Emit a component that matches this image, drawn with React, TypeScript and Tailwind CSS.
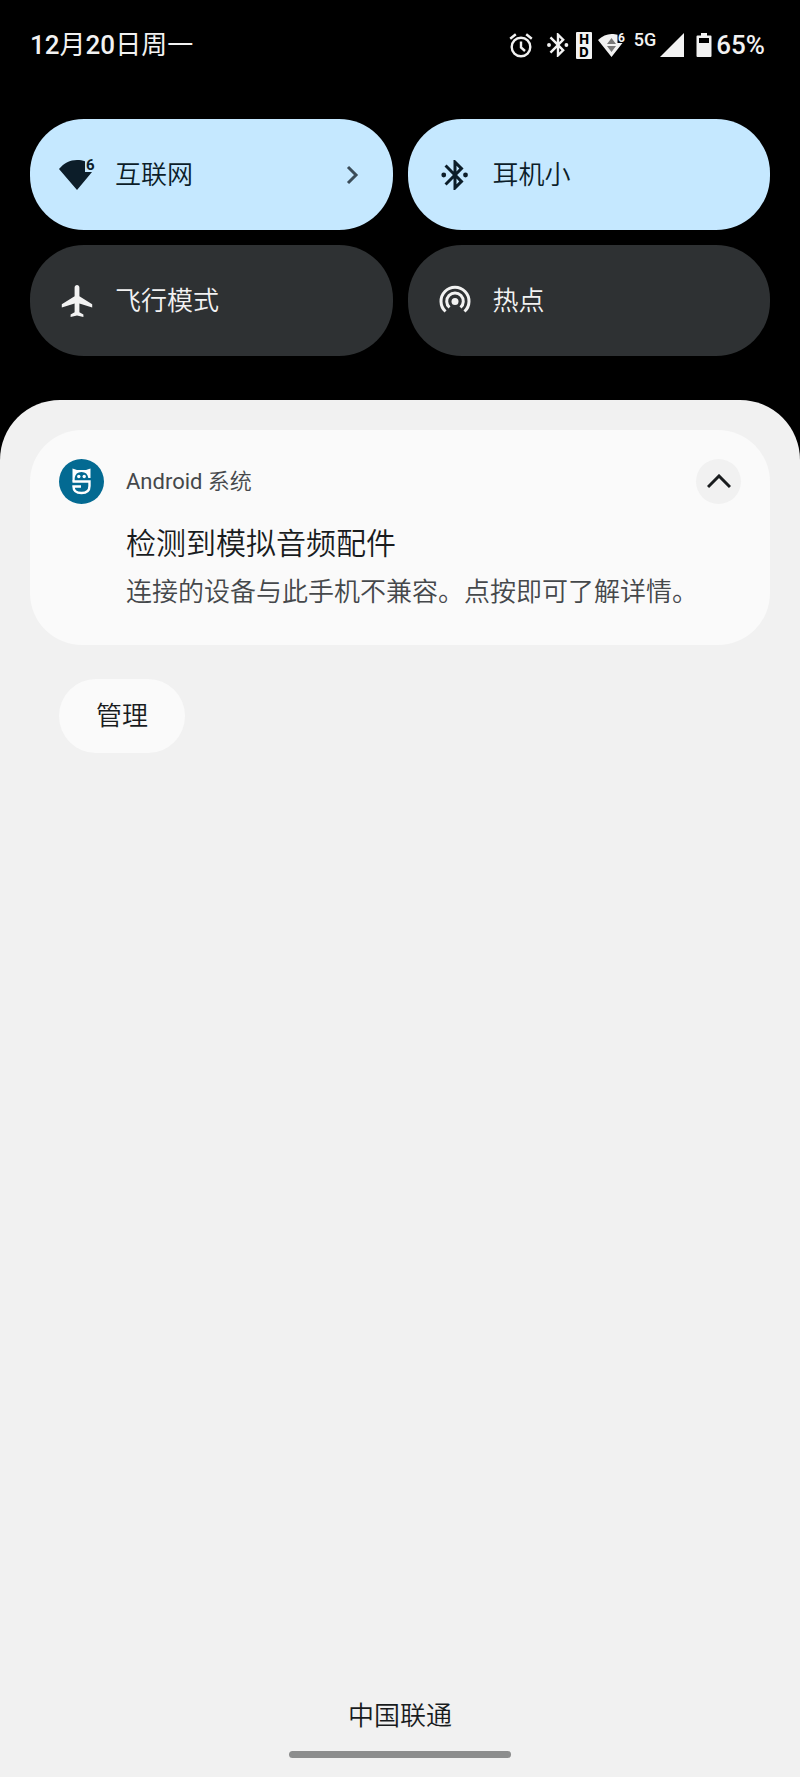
import type { ReactNode } from 'react';

function AlarmIcon() {
  return (
    <svg className="h-[26px] w-6" viewBox="0 0 24 26" fill="none" stroke="currentColor" strokeWidth="2.4">
      <circle cx="12" cy="15" r="9.3" />
      <path d="M12 9.500v6l4 3.500" />
      <path d="M1.200 6.800 6.800 2.200M22.800 6.800l-5.600-4.600" />
    </svg>
  );
}

function BluetoothIcon({ className }: { className: string }) {
  return (
    <svg className={className} viewBox="2 2 20 20" fill="currentColor">
      <path d="M17.710 7.710 12 2h-1v7.590L6.410 5 5 6.410 10.590 12 5 17.590 6.410 19 11 14.410V22h1l5.710-5.710-4.300-4.290 4.300-4.290zM13 5.830l1.880 1.880L13 9.590V5.830zm1.880 10.460L13 18.170v-3.760l1.880 1.880z" />
      <circle cx="4.500" cy="12" r="1.600" />
      <circle cx="19" cy="12" r="1.600" />
    </svg>
  );
}

function HdIcon() {
  return (
    <svg
      className="h-[27px] w-4 overflow-visible font-['Inter',sans-serif]"
      viewBox="0 0 16 27"
      fill="#000"
      fontSize="13"
      fontWeight="800"
      textAnchor="middle"
    >
      <rect width="16" height="27" rx="1" fill="#f2f2f2" />
      <text x="8" y="12">
        H
      </text>
      <text x="8" y="25">
        D
      </text>
    </svg>
  );
}

function WifiStatusIcon() {
  return (
    <svg className="h-[26px] w-7 overflow-visible" viewBox="0 0 28 26" fill="currentColor">
      <path d="M0 8C4 4 9 2 13.500 2c2.500 0 4.500.3 6 .8V11h5L13.500 25z" />
      <path d="M13.500 6 18 12H9zM9 14h9l-4.500 6z" fill="#777" />
      <text x="20" y="10" fontSize="12" fontWeight="700">
        6
      </text>
    </svg>
  );
}

function SignalIcon() {
  return (
    <svg className="h-6 w-6" viewBox="0 0 24 24" fill="currentColor">
      <path d="M24 0v24H0z" />
    </svg>
  );
}

function BatteryIcon() {
  return (
    <svg className="h-6 w-4" viewBox="0 0 16 24" fill="currentColor" fillRule="evenodd">
      <path d="M5 0h6v2.500h3.500q1 0 1 1V23q0 1-1 1h-13q-1 0-1-1V3.500q0-1 1-1H5zM3 5v5h10V5z" />
    </svg>
  );
}

function WifiIcon() {
  return (
    <svg className="h-8 w-9 overflow-visible" viewBox="0 0 36 32" fill="currentColor">
      <path d="M0 10C5 4 11 1 18 1c3 0 5.500.4 8 1.200V13h7L18 31z" />
      <text x="27" y="11" fontSize="15" fontWeight="700">
        6
      </text>
    </svg>
  );
}

function AirplaneIcon() {
  return (
    <svg className="h-8 w-8" viewBox="2 2 20 20" fill="currentColor">
      <path d="M21.500 16v-2l-8-5V3.500c0-.83-.67-1.500-1.500-1.500s-1.500.67-1.500 1.500V9l-8 5v2l8-2.500V19L8 20.500V22l4-1 4 1v-1.500L13.500 19v-5.500l8 2.500z" />
    </svg>
  );
}

function HotspotIcon() {
  return (
    <svg className="h-8 w-8" viewBox="0 0 32 32" fill="none" stroke="currentColor" strokeWidth="3">
      <path d="M6.500 26.500a14 14 0 1 1 19 0" />
      <path d="M10.500 22.500a8.300 8.300 0 1 1 11 0" />
      <circle cx="16" cy="16.500" r="3.500" fill="currentColor" stroke="none" />
    </svg>
  );
}

function SystemIcon() {
  return (
    <svg className="h-[45px] w-[45px]" viewBox="0 0 45 45" fill="#fff">
      <circle cx="22.500" cy="22.500" r="22.500" fill="#036a92" />
      <path d="M13.500 9.500 18 11h9l4.500-1.500V19h-2.200q-.8-6-6.800-6t-6.800 6v3.500h-2.200z" />
      <circle cx="19.800" cy="17.500" r="1.700" />
      <circle cx="25.200" cy="17.500" r="1.700" />
      <path
        d="M13.500 22.500h17V27q0 7-8 7t-8-6.500H22"
        fill="none"
        stroke="#fff"
        strokeWidth="2.400"
      />
    </svg>
  );
}

type TileProps = {
  label: string;
  icon: ReactNode;
  active?: boolean;
  hasMore?: boolean;
};

function Tile({ label, icon, active = false, hasMore = false }: TileProps) {
  return (
    <button
      type="button"
      aria-pressed={active}
      className={`flex h-[111px] items-center rounded-[54px] pl-[27px] pr-[33px] text-[26px] leading-8 ${
        active ? 'bg-[#c5e8ff] text-[#0c1d29]' : 'bg-[#2e3133] text-[#f2f2f2]'
      }`}
    >
      <span className="flex w-10 justify-center">{icon}</span>
      <span className="ml-[18px] flex-1 text-left">{label}</span>
      {hasMore && (
        <svg className="h-5 w-4 text-[#3b4c58]" viewBox="0 0 16 20" fill="none" stroke="currentColor" strokeWidth="3">
          <path d="m4 2 8 8-8 8" />
        </svg>
      )}
    </button>
  );
}

export default function App() {
  return (
    <div className="flex min-h-screen flex-col bg-black font-['Roboto','Noto_Sans_CJK_SC',sans-serif] font-[350]">
      <header className="flex items-center justify-between pt-[29px] pl-[30px] pr-[35px] text-[26px] leading-8 text-[#f2f2f2]">
        <span className="font-normal">
          <span className="font-medium">12</span>月<span className="font-medium">20</span>日周一
        </span>
        <div className="flex items-center">
          <AlarmIcon />
          <BluetoothIcon className="ml-[13px] h-6 w-6" />
          <span className="ml-1.5">
            <HdIcon />
          </span>
          <span className="ml-1.5">
            <WifiStatusIcon />
          </span>
          <span className="ml-2 self-start text-[18px] leading-[22px] font-medium">5G</span>
          <span className="ml-1">
            <SignalIcon />
          </span>
          <span className="ml-3">
            <BatteryIcon />
          </span>
          <span className="ml-1 font-medium">65%</span>
        </div>
      </header>

      <section className="mt-[58px] grid grid-cols-2 gap-[15px] px-[30px]">
        <Tile label="互联网" icon={<WifiIcon />} active hasMore />
        <Tile label="耳机小" icon={<BluetoothIcon className="h-[30px] w-[30px]" />} active />
        <Tile label="飞行模式" icon={<AirplaneIcon />} />
        <Tile label="热点" icon={<HotspotIcon />} />
      </section>

      <main className="mt-11 flex flex-1 flex-col rounded-t-[60px] bg-[#f1f1f1] px-[30px] pt-[30px] pb-[19px]">
        <article className="rounded-[52px] bg-[#fafafa] px-[29px] pt-[29px] pb-[33px]">
          <div className="flex items-center">
            <SystemIcon />
            <p className="ml-[22px] flex-1 text-[22px] leading-8 text-[#45484b]">
              <span className="font-normal">Android</span> 系统
            </p>
            <button
              type="button"
              aria-label="收起"
              className="flex h-[45px] w-[45px] items-center justify-center rounded-full bg-[#f1f1f1] text-[#191c1e]"
            >
              <svg className="h-4 w-6" viewBox="0 0 24 16" fill="none" stroke="currentColor" strokeWidth="3">
                <path d="M1 13 12 2l11 11" />
              </svg>
            </button>
          </div>
          <div className="mt-5 pl-[67px]">
            <h2 className="text-[30px] leading-10 text-[#191c1e]">检测到模拟音频配件</h2>
            <p className="mt-2 text-[26px] leading-10 text-[#45484b]">连接的设备与此手机不兼容。点按即可了解详情。</p>
          </div>
        </article>

        <button
          type="button"
          className="mt-[34px] ml-[29px] h-[74px] self-start rounded-full bg-[#fafafa] px-[37px] text-[26px] leading-8 text-[#191c1e]"
        >
          管理
        </button>

        <footer className="mt-auto flex flex-col items-center">
          <p className="text-[26px] leading-8 text-[#191c1e]">中国联通</p>
          <div className="mt-[19px] h-[7px] w-[222px] rounded-full bg-[#8c8d8d]" />
        </footer>
      </main>
    </div>
  );
}
